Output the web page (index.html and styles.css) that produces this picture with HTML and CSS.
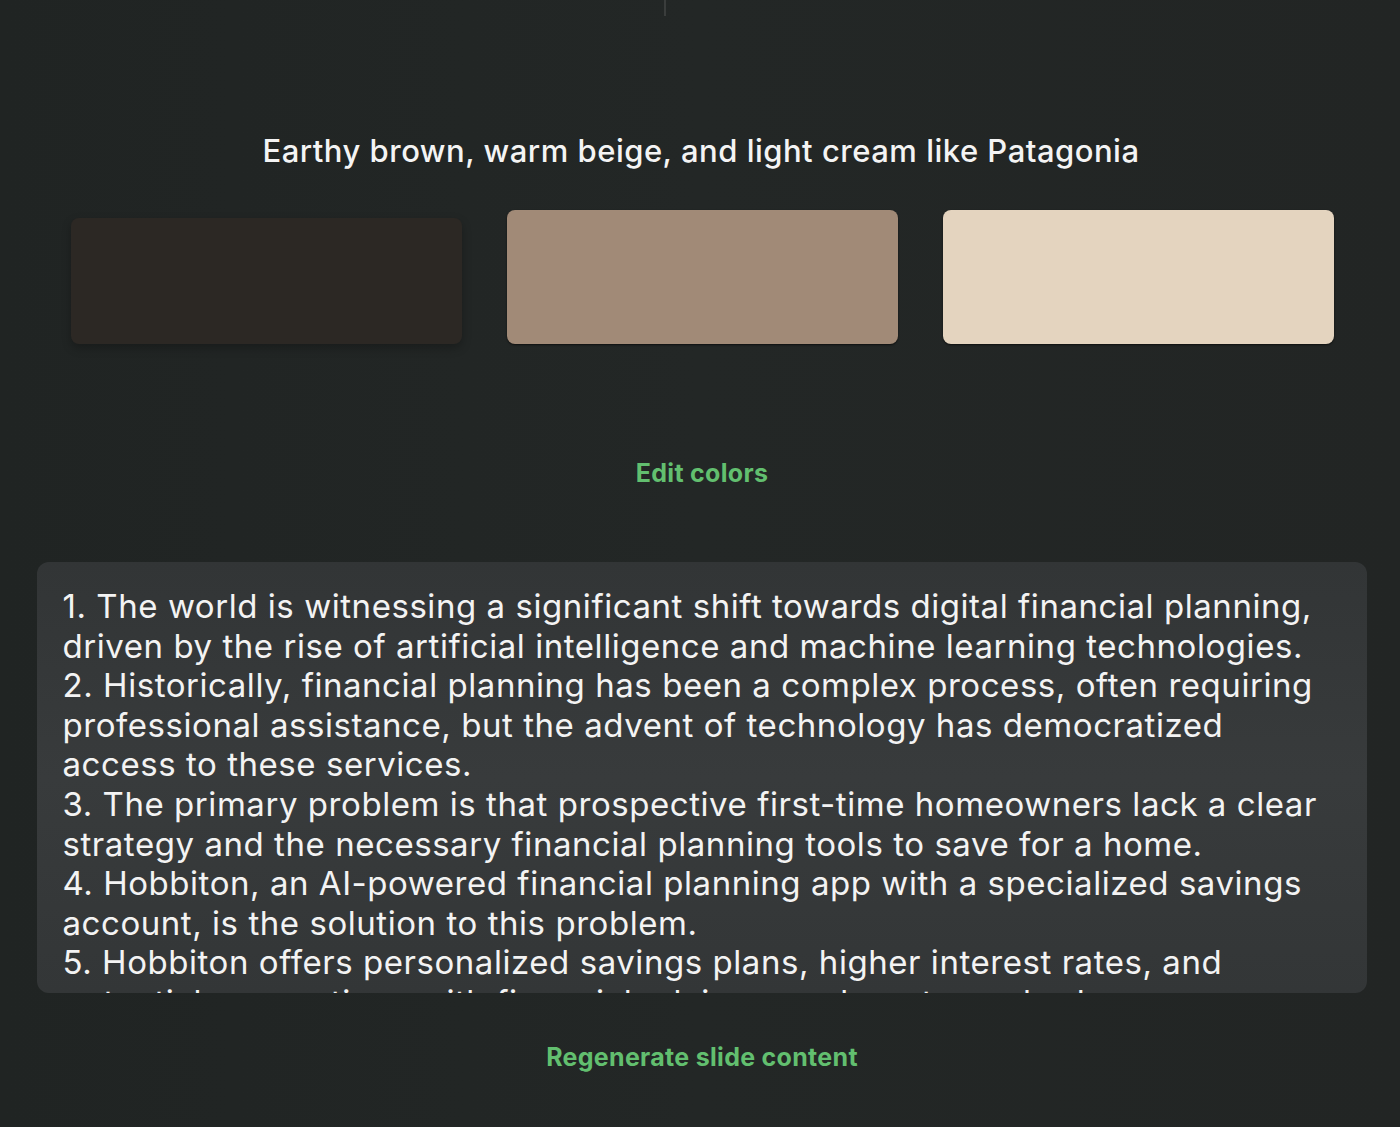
FILE: index.html
```html
<!DOCTYPE html>
<html lang="en">
<head>
<meta charset="utf-8">
<title>Colors and slide content</title>
<link rel="stylesheet" href="styles.css">
</head>
<body>
<div class="page">
  <div class="topline"></div>
  <h1 class="theme-title">Earthy brown, warm beige, and light cream like Patagonia</h1>
  <div class="swatches">
    <div class="swatch swatch-dark"></div>
    <div class="swatch swatch-beige"></div>
    <div class="swatch swatch-cream"></div>
  </div>
  <button class="link-btn edit-btn">Edit colors</button>
  <div class="content-box">
    <p class="content-text">1. The world is witnessing a significant shift towards digital financial planning, driven by the rise of artificial intelligence and machine learning technologies.<br>2. Historically, financial planning has been a complex process, often requiring professional assistance, but the advent of technology has democratized access to these services.<br>3. The primary problem is that prospective first-time homeowners lack a clear strategy and the necessary financial planning tools to save for a home.<br>4. Hobbiton, an AI-powered financial planning app with a specialized savings account, is the solution to this problem.<br>5. Hobbiton offers personalized savings plans, higher interest rates, and potential connections with financial advisors and mortgage brokers.</p>
  </div>
  <button class="link-btn regen-btn">Regenerate slide content</button>
</div>
</body>
</html>
```
FILE: styles.css
```css
html, body {
  margin: 0;
  padding: 0;
}
body {
  background: linear-gradient(90deg, #202423 0%, #232726 50%, #222524 100%);
  font-family: "Inter", "Noto Sans", sans-serif;
  color: #f2f2f2;
  width: 1400px;
  height: 1127px;
  overflow: hidden;
}
.page {
  display: flex;
  flex-direction: column;
  align-items: center;
  height: 1127px;
}
.topline {
  width: 2px;
  height: 16px;
  background: #3a3d3c;
  margin-left: -70px;
}
.theme-title {
  margin: 115px 0 0 2px;
  font-size: 31px;
  font-weight: 500;
  line-height: 40px;
  color: #f4f4f4;
  letter-spacing: 0.5px;
}
.swatches {
  display: grid;
  grid-template-columns: repeat(3, 391px);
  gap: 45px;
  margin: 39px 0 0 4px;
}
.swatch {
  height: 134px;
  border-radius: 8px;
}
.swatch-dark {
  background: #2c2824;
  box-shadow: 0 4px 10px rgba(0,0,0,0.25);
  margin: 8px 0 -1px 0;
  height: 126px;
}
.swatch-beige {
  background: #a18a77;
  box-shadow: 0 1px 2px rgba(0,0,0,0.6);
}
.swatch-cream {
  background: #e4d4bf;
  box-shadow: 0 1px 2px rgba(0,0,0,0.6);
}
.link-btn {
  background: none;
  border: none;
  padding: 0;
  font-family: "Inter", "Noto Sans", sans-serif;
  font-weight: 700;
  font-size: 25px;
  letter-spacing: 0.3px;
  color: #62bf6f;
  cursor: pointer;
}
.edit-btn {
  margin-top: 114px;
  line-height: 30px;
  margin-left: 4px;
}
.content-box {
  margin-top: 74px;
  width: 1330px;
  height: 431px;
  box-sizing: border-box;
  background: linear-gradient(180deg, #323536 0%, #383b3c 50%, #333637 100%);
  border-radius: 12px;
  padding: 25px 40px 0 26px;
  overflow: hidden;
  margin-left: 3px;
}
.content-text {
  margin: 0;
  font-size: 33px;
  line-height: 39.6px;
  color: #f3f3f3;
  letter-spacing: 0.55px;
}
.regen-btn {
  margin-top: 49px;
  line-height: 30px;
  margin-left: 4px;
}
```
